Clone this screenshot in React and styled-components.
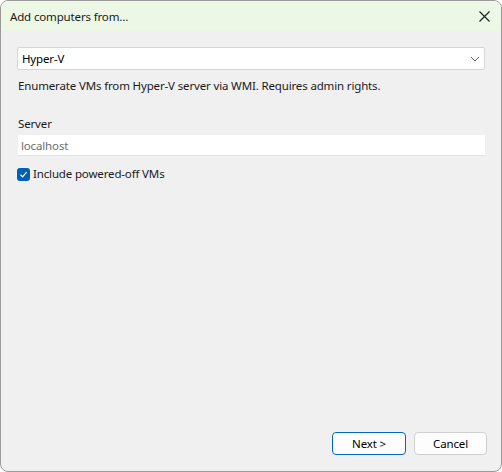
import styled, { createGlobalStyle } from 'styled-components';

const Global = createGlobalStyle`
  html, body { margin: 0; padding: 0; background: #ffffff; }
  body {
    font-family: "Segoe UI", "Noto Sans", "Open Sans", sans-serif;
    font-size: 11.5px;
    letter-spacing: -0.15px;
    color: #1a1a1a;
  }
`

const Win = styled.div`
  box-sizing: border-box;
  width: 502px;
  height: 472px;
  border: 1px solid #9a9a9a;
  border-radius: 8px;
  background: #f0f0f0;
  overflow: hidden;
  display: flex;
  flex-direction: column;
`

const TitleBar = styled.div`
  height: 30px;
  background: #edf7e6;
  display: flex;
  align-items: center;
  justify-content: space-between;
  padding: 0 0 0 9px;
  flex: none;
`

const Title = styled.span`
  color: #1a1a1a;
`

const CloseBtn = styled.div`
  width: 34px;
  height: 30px;
  display: flex;
  align-items: center;
  justify-content: center;
`

const Body = styled.div`
  flex: 1;
  display: flex;
  flex-direction: column;
  padding: 16px 16px 0 16px;
`

const Select = styled.div`
  box-sizing: border-box;
  height: 23px;
  background: #ffffff;
  border: 1px solid #d6d6d6;
  border-radius: 2px;
  display: flex;
  align-items: center;
  justify-content: space-between;
  padding: 0 4px 0 4px;
  color: #000;
`

const Desc = styled.div`
  margin-top: 8px;
  padding-left: 1px;
  line-height: 16px;
  color: #1a1a1a;
`

const Label = styled.div`
  margin-top: 22px;
  padding-left: 1px;
  line-height: 16px;
`

const Input = styled.div`
  box-sizing: border-box;
  margin: 3px 0 0 1px;
  height: 21px;
  background: #ffffff;
  border-bottom: 1px solid #e3e3e3;
  display: flex;
  align-items: center;
  padding-left: 3px;
  color: #6d6d6d;
`

const CheckRow = styled.label`
  margin-top: 10px;
  display: flex;
  align-items: center;
  gap: 3px;
  line-height: 16px;
`

const Box = styled.span`
  width: 13px;
  height: 13px;
  border-radius: 3px;
  background: #005fb8;
  display: flex;
  align-items: center;
  justify-content: center;
`

const Footer = styled.div`
  margin-top: auto;
  margin-right: -2px;
  display: flex;
  justify-content: flex-end;
  gap: 8px;
  padding: 0 0 16px 0;
`

const Button = styled.button`
  box-sizing: border-box;
  width: ${p => p.$w || 74}px;
  height: 23px;
  font-family: inherit;
  font-size: 11.5px;
  letter-spacing: -0.15px;
  color: #000;
  background: #fdfdfd;
  border: 1px solid ${p => (p.$primary ? '#0067c0' : '#d0d0d0')};
  border-radius: 4px;
  padding: 0;
`

export default function App() {
  return (
    <>
      <Global />
      <Win>
        <TitleBar>
          <Title>Add computers from...</Title>
          <CloseBtn>
            <svg width="11" height="11" viewBox="0 0 11 11">
              <path d="M0.5 0.5L10.5 10.5M10.5 0.5L0.5 10.5" stroke="#1a1a1a" strokeWidth="1.1" />
            </svg>
          </CloseBtn>
        </TitleBar>
        <Body>
          <Select>
            <span>Hyper-V</span>
            <svg width="10" height="6" viewBox="0 0 10 6">
              <path d="M1 1L5 5L9 1" stroke="#606060" strokeWidth="1" fill="none" />
            </svg>
          </Select>
          <Desc>Enumerate VMs from Hyper-V server via WMI. Requires admin rights.</Desc>
          <Label>Server</Label>
          <Input>localhost</Input>
          <CheckRow>
            <Box>
              <svg width="9" height="9" viewBox="0 0 9 9">
                <path d="M1.5 4.8L3.6 6.8L7.6 2.2" stroke="#fff" strokeWidth="1.2" fill="none" />
              </svg>
            </Box>
            <span>Include powered-off VMs</span>
          </CheckRow>
          <Footer>
            <Button $primary>Next &gt;</Button>
            <Button $w={73}>Cancel</Button>
          </Footer>
        </Body>
      </Win>
    </>
  )
}
